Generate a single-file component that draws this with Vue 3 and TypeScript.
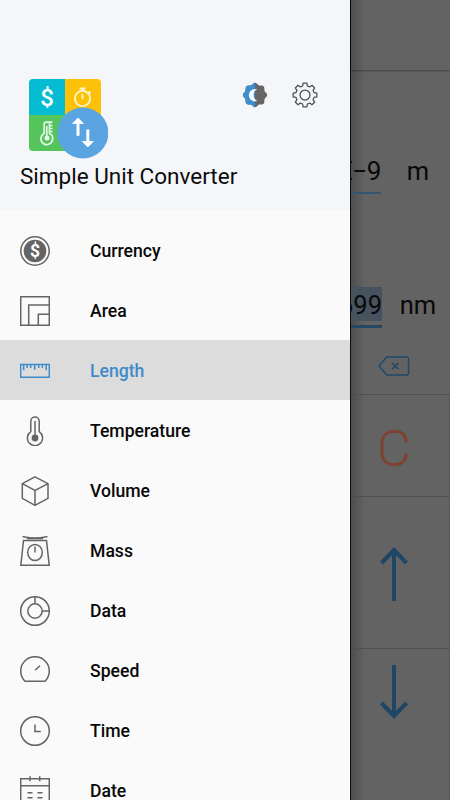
<script setup lang="ts">
interface Category {
  id: string
  label: string
}

const categories: Category[] = [
  { id: 'currency', label: 'Currency' },
  { id: 'area', label: 'Area' },
  { id: 'length', label: 'Length' },
  { id: 'temperature', label: 'Temperature' },
  { id: 'volume', label: 'Volume' },
  { id: 'mass', label: 'Mass' },
  { id: 'data', label: 'Data' },
  { id: 'speed', label: 'Speed' },
  { id: 'time', label: 'Time' },
  { id: 'date', label: 'Date' },
]
const selected = 'length'

// Outline of the settings gear: eight rounded teeth
function gear(cx: number, cy: number, inner: number, outer: number): string {
  const pts: string[] = []
  for (let i = 0; i < 8; i++) {
    const steps: [number, number][] = [[-15, inner], [-9, outer], [9, outer], [15, inner]]
    for (const [offset, r] of steps) {
      const a = ((i * 45 + offset) * Math.PI) / 180
      pts.push(`${(cx + r * Math.sin(a)).toFixed(2)} ${(cy - r * Math.cos(a)).toFixed(2)}`)
    }
  }
  return `M${pts.join('L')}Z`
}

// Soft eight-lobed badge used by the theme switch
function badge(cx: number, cy: number): string {
  const pts: string[] = []
  for (let d = 0; d < 360; d += 5) {
    const a = (d * Math.PI) / 180
    const r = 11.3 + 0.9 * Math.cos(8 * a)
    pts.push(`${(cx + r * Math.sin(a)).toFixed(2)} ${(cy - r * Math.cos(a)).toFixed(2)}`)
  }
  return `M${pts.join('L')}Z`
}
</script>

<template>
  <div class="screen">
    <aside class="drawer">
      <header class="head">
        <div class="head-top">
          <svg class="logo" width="80" height="81" viewBox="0 0 80 81">
            <clipPath id="tile"><rect x="1" y="1" width="72" height="72" rx="4" /></clipPath>
            <g clip-path="url(#tile)">
              <rect x="1" y="1" width="36" height="36" fill="#06bcd3" />
              <rect x="37" y="1" width="36" height="36" fill="#fec109" />
              <rect x="1" y="37" width="36" height="36" fill="#56c45d" />
              <rect x="37" y="37" width="36" height="36" fill="#56c45d" />
            </g>
            <text x="19" y="27.5" text-anchor="middle" class="logo-dollar">$</text>
            <g fill="none" stroke="#fff6d0" stroke-width="1.8">
              <circle cx="54.5" cy="20.5" r="7.6" />
              <path d="M51.5 10.5h6M54.5 10.5v3M60.5 13.5l2 2M54.5 16v5" />
            </g>
            <g fill="none" stroke="#e5f8e7" stroke-width="1.7">
              <path d="M16.2 55.5V46q0-1.8 2.3-1.8h6M21.5 45v10.5q4 2 3 5.8a5.8 5.8 0 1 1-8.3-5.8M21 47.5h3.5M21 50.5h3.5M21 53.5h3.5" />
              <path d="M18.8 48v12" />
              <circle cx="19" cy="60" r="2.5" fill="#e5f8e7" stroke="none" />
            </g>
            <circle cx="54.9" cy="55" r="25.5" fill="#5aa4e1" />
            <path d="M50 57.8V44" stroke="#fff" stroke-width="3" fill="none" />
            <path d="M44.5 45.5 50 40 55.5 45.5Z" fill="#fff" stroke="#fff" stroke-width=".8" />
            <path d="M59.8 51.5v14" stroke="#fff" stroke-width="3" fill="none" />
            <path d="M54.3 63.5 59.8 69 65.3 63.5Z" fill="#fff" stroke="#fff" stroke-width=".8" />
          </svg>
          <div class="actions">
            <svg width="26" height="26" viewBox="0 0 26 26">
              <clipPath id="left"><rect width="13" height="26" /></clipPath>
              <path :d="badge(13, 13)" fill="#666" />
              <path :d="badge(13, 13)" fill="#3e8fd0" clip-path="url(#left)" />
              <path d="M13.4 6.9A6.2 6.2 0 1 0 15.2 18.9A6.6 6.6 0 0 1 15.2 7.1Q14.4 6.8 13.4 6.9Z" fill="#f8fafb" />
            </svg>
            <svg width="26" height="26" viewBox="0 0 26 26" fill="none" stroke="#4d4f52" stroke-width="1.25" stroke-linejoin="round">
              <path :d="gear(13, 13, 9.3, 12)" />
              <circle cx="13" cy="13" r="5" />
            </svg>
          </div>
        </div>
        <h1 class="title">Simple Unit Converter</h1>
      </header>

      <nav class="list">
        <a v-for="c in categories" :key="c.id" class="item" :class="{ active: c.id === selected }">
          <svg class="icon" width="30" height="30" viewBox="0 0 30 30">
            <template v-if="c.id === 'currency'">
              <circle cx="15" cy="15" r="14.2" />
              <circle cx="15" cy="15" r="11.3" class="solid" />
              <text x="15" y="20.8" text-anchor="middle" class="coin">$</text>
            </template>
            <template v-else-if="c.id === 'area'">
              <path d="M.7 .7h28.6v28.6H.7ZM8.7 29V9H29M18.3 29V18.3H29" />
            </template>
            <template v-else-if="c.id === 'length'">
              <path d="M.7 8.6h28.6v12.6H.7ZM3.7 8.5v5.7M7.2 8.5v3.4M10.7 8.5v3.4M14.7 8.5v5.2M18.7 8.5v3.4M22.3 8.5v3.4M26.2 8.5v5.7" />
            </template>
            <template v-else-if="c.id === 'temperature'">
              <path d="M10.8 15.7V5.2a4.2 4.2 0 0 1 8.4 0v10.5a7.6 7.6 0 1 1-8.4 0Z" />
              <path d="M15 5v17" />
              <circle cx="15" cy="22" r="3.4" class="solid" />
            </template>
            <template v-else-if="c.id === 'volume'">
              <path d="M15 .9 28 7.6V22.3L15 29.3 2.3 22.3V7.6ZM2.3 7.6 15 14.5 28 7.6M15 14.5v14.8" />
            </template>
            <template v-else-if="c.id === 'mass'">
              <path d="M2.5 .5Q15 3.6 27.5 .5M7 2.5h16M3.5 4.4h23L29.2 29.3H.8Z" />
              <ellipse cx="15" cy="16.5" rx="7.3" ry="8" />
              <path d="M15 10.5v6" />
            </template>
            <template v-else-if="c.id === 'data'">
              <circle cx="15" cy="15" r="14.3" />
              <circle cx="15" cy="15" r="7.2" />
              <path d="M15 .7v7.1M22.2 15h7.1" />
            </template>
            <template v-else-if="c.id === 'speed'">
              <path d="M5 25.2A14.3 14.3 0 1 1 25 25.2ZM15 14.3 20 9.8" />
            </template>
            <template v-else-if="c.id === 'time'">
              <circle cx="15" cy="15" r="14.3" />
              <path d="M15 8.5v7h5.8" />
            </template>
            <template v-else>
              <path d="M.7 2.8h28.6v26.5H.7ZM.7 9.8h28.6M10 .3v5M19.7 .3v5M7.5 16.7h5M17.5 16.7h5M7.5 21.8h5M17.5 21.8h5" />
            </template>
          </svg>
          <span>{{ c.label }}</span>
        </a>
      </nav>
    </aside>

    <main class="behind">
      <div class="bar"></div>
      <section class="fields">
        <div class="field first">
          <div class="value"><span>E−9</span></div>
          <div class="unit">m</div>
        </div>
        <div class="field second">
          <div class="value"><span>699</span></div>
          <div class="unit">nm</div>
        </div>
        <div class="erase">
          <svg width="32" height="20" viewBox="0 0 32 20" fill="none" stroke="#204969" stroke-width="1.5">
            <path d="M8.7 1h20a1.8 1.8 0 0 1 1.8 1.8v14.4a1.8 1.8 0 0 1-1.8 1.8h-20L1 10Z" stroke-linejoin="round" />
            <path d="M14 6.7 20.5 13.2M20.5 6.7 14 13.2" />
          </svg>
        </div>
      </section>
      <section class="keys">
        <div class="key clear">
          <svg width="30" height="40" viewBox="0 0 30 40" fill="none" stroke="#7f4231" stroke-width="3">
            <path d="M27.2 14.2C26.8 6.5 22.6 3.3 15.5 3.3 7 3.3 3 8.5 3 16v8c0 7.5 4 12.7 12.3 12.7 7.3 0 11.5-3.6 11.9-11" />
          </svg>
        </div>
        <div class="key">
          <svg width="30" height="56" viewBox="0 0 30 56" fill="none" stroke="#1e4666" stroke-width="4">
            <path d="M15 55V4M2.5 17 15 4 27.5 17" />
          </svg>
        </div>
        <div class="key down">
          <svg width="30" height="56" viewBox="0 0 30 56" fill="none" stroke="#1e4666" stroke-width="4">
            <path d="M15 1V52M2.5 39 15 52 27.5 39" />
          </svg>
        </div>
      </section>
    </main>
  </div>
</template>

<style>
body {
  margin: 0;
  overflow: hidden;
}
</style>

<style scoped>
.screen {
  display: flex;
  width: 450px;
  height: 800px;
  overflow: hidden;
  background: #636363;
  font-family: Roboto, "Liberation Sans", sans-serif;
}
.drawer {
  flex: none;
  width: 350px;
  height: 800px;
  overflow: hidden;
  background: #fafafa;
}
.head {
  box-sizing: border-box;
  height: 210px;
  padding: 78px 32px 0 20px;
  background: #f4f6f9;
}
.head-top {
  display: flex;
  justify-content: space-between;
  align-items: flex-start;
  height: 83px;
}
.logo {
  margin-left: 8px;
}
.logo-dollar {
  font: 500 24px Roboto, sans-serif;
  fill: #fff;
}
.actions {
  display: flex;
  gap: 24px;
  padding-top: 4px;
}
.title {
  margin: 0;
  font-size: 22.5px;
  font-weight: 400;
  line-height: 30px;
  color: #0c0c0c;
  white-space: nowrap;
}
.list {
  padding-top: 10px;
}
.item {
  box-sizing: border-box;
  display: flex;
  align-items: center;
  gap: 40px;
  height: 60px;
  padding: 1px 20px 0;
  font-size: 17.6px;
  font-weight: 500;
  color: #080808;
}
.item.active {
  background: #dcdcdc;
  color: #3f8bca;
}
.icon {
  flex: none;
  fill: none;
  stroke: #646464;
  stroke-width: 1.5;
}
.active .icon {
  stroke: #3f8bca;
}
.solid {
  fill: #646464;
  stroke: none;
}
.coin {
  font: 700 17.5px Roboto, sans-serif;
  fill: #fff;
  stroke: none;
}
.behind {
  flex: 1;
  box-sizing: border-box;
  height: 800px;
  border-left: 1px solid #0c0f12;
  background: linear-gradient(90deg, rgba(0, 0, 0, .22), transparent 14px), #636363;
}
.bar {
  height: 70px;
  box-shadow: 0 1px 2px rgba(0, 0, 0, .35);
}
.fields {
  box-sizing: border-box;
  height: 324px;
  padding-top: 83px;
}
.field {
  display: flex;
  color: #090909;
  font-size: 25.5px;
  line-height: 34px;
}
.value {
  display: flex;
  justify-content: flex-end;
  box-sizing: border-box;
  flex: none;
  width: 30px;
  overflow: hidden;
}
.first .value {
  height: 41px;
  padding-top: 1px;
  font-size: 26px;
  letter-spacing: -.4px;
  border-bottom: 2px solid #345570;
}
.first .unit {
  padding-top: 1px;
}
.second {
  margin-top: 93px;
}
.second .value {
  height: 41px;
  width: 31px;
  border-bottom: 3px solid #244861;
}
.second .value span {
  height: 34px;
  background: #46525d;
  line-height: 37px;
}
.second .unit {
  line-height: 37px;
}
.unit {
  flex: none;
  width: 64px;
  margin-left: 5px;
  text-align: center;
}
.second .unit {
  margin-left: 4px;
}
.erase {
  display: flex;
  width: 86px;
  padding-top: 28px;
  justify-content: center;
}
.keys {
  display: grid;
  grid-template-rows: 102px 152px 152px;
}
.key {
  display: flex;
  box-sizing: border-box;
  justify-content: center;
  align-items: flex-start;
  padding: 49px 12px 0 0;
  border-top: 1px solid #505050;
  border-right: 1px solid #585858;
}
.key.clear {
  padding-top: 33px;
}
.key.down {
  padding-top: 15px;
}
</style>
